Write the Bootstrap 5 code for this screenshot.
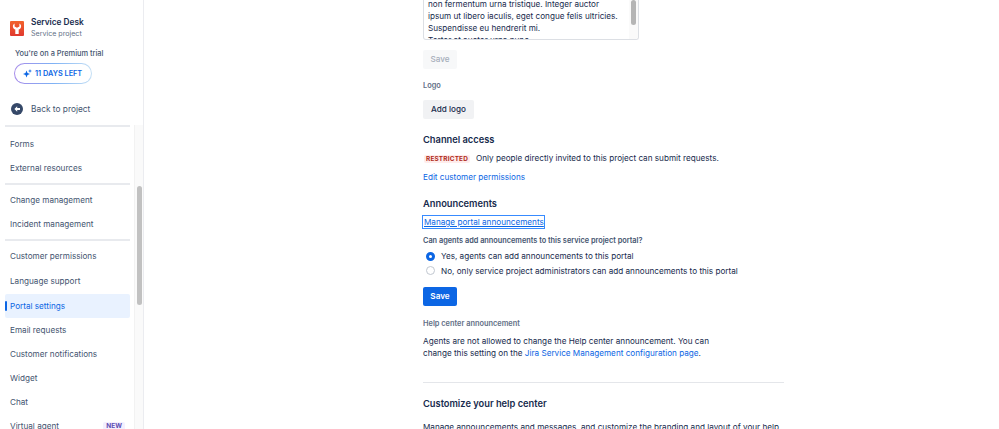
<!DOCTYPE html>
<html lang="en">
<head>
  <meta charset="UTF-8">
  <meta name="viewport" content="width=device-width, initial-scale=1.0">
  <title>Portal settings</title>
  <link href="https://cdn.jsdelivr.net/npm/bootstrap@5.3.0/dist/css/bootstrap.min.css" rel="stylesheet">
  <style>
    html, body {
      height: 429px;
      overflow: hidden;
    }
    body {
      font-family: Inter, "Liberation Sans", sans-serif;
      font-size: 8.17px;
      line-height: 12px;
      color: #172b4d;
      background: #fff;
    }
    a { color: #0c66e4; text-decoration: none; }
    .side-bar {
      width: 144px;
      height: 429px;
      flex: none;
      border-right: 1px solid #ebecf0;
      overflow: hidden;
    }
    .side-head { height: 125px; padding: 15px 0 0 10px; }
    .proj-logo {
      width: 14px;
      height: 15px;
      margin-top: 6px;
      margin-right: 7px;
    }
    .proj-name { font-weight: 600; font-size: 8.3px; line-height: 12px; margin-top: 1px; }
    .proj-sub { font-size: 7.1px; color: #626f86; line-height: 12px; }
    .trial-text { font-size: 7.4px; font-weight: 500; margin: 8px 0 0 5px; line-height: 12px; color: #44546f; }
    .trial-pill {
      display: flex;
      align-items: center;
      gap: 3px;
      height: 21px;
      width: 78px;
      margin: 3px 0 0 4px;
      padding-left: 8px;
      border-radius: 11px;
      border: 1px solid transparent;
      background: linear-gradient(#fff, #fff) padding-box, linear-gradient(90deg, #a78bea, #7fb2f5 50%, #c5e0f5) border-box;
      font-size: 7.3px;
      font-weight: 600;
      color: #0c66e4;
    }
    .back-row {
      display: flex;
      align-items: center;
      gap: 8px;
      margin: 19px 0 0 1px;
      font-size: 8.35px;
      color: #44546f;
    }
    .side-rule { height: 2px; background: #e8eaee; margin-left: 5px; width: 125px; }
    .nav-col { width: 134px; }
    .nav-group { padding: 3px 0; }
    .nav-group.first { padding-top: 5px; }
    .side-item {
      display: flex;
      align-items: center;
      justify-content: space-between;
      height: 24px;
      margin-left: 5px;
      width: 125px;
      padding: 0 5px 0 5px;
      font-size: 8.17px;
      color: #44546f;
      border-radius: 2px;
      position: relative;
    }
    .side-item.spaced { margin-bottom: 1px; }
    .side-item.active { background: #e9f2ff; color: #0c66e4; }
    .side-item.active::before {
      content: "";
      position: absolute;
      left: 0;
      top: 7px;
      bottom: 7px;
      width: 2px;
      border-radius: 1px;
      background: #0c66e4;
    }
    .new-tag {
      font-size: 6.5px;
      font-weight: 700;
      color: #5e4db2;
      background: #f3f0ff;
      padding: 0 3px;
      line-height: 9px;
      border-radius: 2px;
    }
    .scroll-track { width: 9px; background: #fafafa; border-left: 1px solid #f2f2f2; padding-left: 2px; }
    .scroll-thumb { width: 5px; height: 119px; margin-top: 61px; background: #c1c1c1; border-radius: 3px; }
    .main-col { width: 361px; margin-left: 279px; flex: none; }
    .text-box {
      height: 40px;
      width: 216px;
      margin-bottom: 10px;
      border: 1px solid #dcdfe4;
      border-top: 0;
      border-radius: 0 0 3px 3px;
      overflow: hidden;
      position: relative;
      padding: 0 0 0 4px;
      white-space: nowrap;
    }
    .box-copy { margin-top: -2px; }
    .box-track { position: absolute; top: 0; right: 0; bottom: 0; width: 9px; background: #fafafa; }
    .box-thumb {
      position: absolute;
      top: 0;
      right: 2px;
      width: 5px;
      height: 25px;
      border-radius: 3px;
      background: #b5b5b5;
    }
    .ak-btn {
      display: block;
      height: 19px;
      line-height: 19px;
      padding: 0 8px;
      border-radius: 2px;
      border: 0;
      font-size: 8.17px;
      font-weight: 500;
      background: #f1f2f4;
      color: #172b4d;
    }
    .ak-btn.off { color: #a5adba; background: #f7f8f9; width: 34px; padding: 0; text-align: center; }
    .ak-btn.go { background: #0c66e4; color: #fff; width: 34px; padding: 0; text-align: center; font-weight: 600; margin-top: 9px; }
    .field-label { font-size: 7.4px; font-weight: 600; color: #626f86; line-height: 12px; }
    .sect-title { font-size: 9.3px; font-weight: 600; line-height: 14px; margin: 0; color: #172b4d; }
    .lozenge {
      display: inline-block;
      font-size: 6.4px;
      line-height: 8px;
      font-weight: 700;
      color: #ae2a19;
      background: #ffeceb;
      padding: 0 2px;
      border-radius: 2px;
      margin: 0 6px 0 1px;
      letter-spacing: .2px;
    }
    .focus-link {
      display: inline-block;
      outline: 1px solid #388bff;
      color: #0c66e4;
      text-decoration: underline;
      line-height: 12px;
      padding: 0 0 0 1px;
    }
    .ask-label { font-size: 7.33px; font-weight: 600; color: #44546f; }
    .opt-row { display: flex; align-items: center; gap: 6px; padding-left: 3px; height: 14.5px; color: #172b4d; white-space: nowrap; }
    .opt-dot { width: 9px; height: 9px; border-radius: 50%; background: #fff; border: 1px solid #c1c7d0; flex: none; }
    .opt-dot.on { border: 3px solid #0c66e4; }
    .page-rule { height: 1px; background: #e4e6ea; margin-top: 23px; }
    .gap-2px { margin-top: 2px; }
    .gap-5px { margin-top: 5px; }
    .gap-7px { margin-top: 7px; }
    .gap-8px { margin-top: 8px; }
    .gap-10px { margin-top: 10px; }
    .gap-11px { margin-top: 11px; }
    .gap-12px { margin-top: 12px; }
    .gap-14px { margin-top: 14px; }
  </style>
</head>
<body>
  <div class="d-flex">
    <div class="side-bar">
      <div class="side-head">
        <div class="d-flex">
          <svg class="proj-logo" viewBox="0 0 14 15">
            <defs>
              <linearGradient id="logoFill" x1="0" y1="0" x2="0" y2="1">
                <stop offset="0" stop-color="#f2632c"/>
                <stop offset="1" stop-color="#e0392f"/>
              </linearGradient>
            </defs>
            <rect width="14" height="15" rx="1" fill="url(#logoFill)"/>
            <path d="M4.600 2.600C3.200 3.300 2.600 4.800 3 6.200 3.300 7.300 4.200 8.100 5.300 8.400V13H8.700V8.400C9.800 8.100 10.700 7.300 11 6.200 11.400 4.800 10.800 3.300 9.400 2.600V5.400L7 6.800 4.600 5.400Z" fill="#fff"/>
          </svg>
          <div>
            <div class="proj-name">Service Desk</div>
            <div class="proj-sub">Service project</div>
          </div>
        </div>
        <div class="trial-text">You're on a Premium trial</div>
        <div class="trial-pill">
          <svg width="9" height="9" viewBox="0 0 9 9"><path d="M3.500 1.500l1 2.500 2.500 1-2.500 1-1 2.500-1-2.500L0 5l2.500-1z M7 0l.5 1.500L9 2l-1.500.5L7 4l-.5-1.500L5 2l1.500-.5z" fill="#0c66e4"/></svg>
          11 DAYS LEFT
        </div>
        <div class="back-row">
          <svg width="12" height="12" viewBox="0 0 12 12"><circle cx="6" cy="6" r="6" fill="#354868"/><path d="M6.200 3.300L3.400 6l2.800 2.700V6.900H9V5.100H6.200z" fill="#fff"/></svg>
          <span>Back to project</span>
        </div>
      </div>
      <div class="d-flex">
        <div class="nav-col">
          <div class="side-rule"></div>
          <div class="nav-group first">
            <div class="side-item">Forms</div>
            <div class="side-item">External resources</div>
          </div>
          <div class="side-rule"></div>
          <div class="nav-group">
            <div class="side-item">Change management</div>
            <div class="side-item">Incident management</div>
          </div>
          <div class="side-rule"></div>
          <div class="nav-group">
            <div class="side-item spaced">Customer permissions</div>
            <div class="side-item spaced">Language support</div>
            <div class="side-item active">Portal settings</div>
            <div class="side-item">Email requests</div>
            <div class="side-item">Customer notifications</div>
            <div class="side-item">Widget</div>
            <div class="side-item">Chat</div>
            <div class="side-item">Virtual agent <span class="new-tag">NEW</span></div>
          </div>
        </div>
        <div class="scroll-track"><div class="scroll-thumb"></div></div>
      </div>
    </div>

    <div class="main-col">
      <div class="text-box">
        <div class="box-copy">non fermentum urna tristique. Integer auctor<br>ipsum ut libero iaculis, eget congue felis ultricies.<br>Suspendisse eu hendrerit mi.<br>Tortor at auctor urna nunc.</div>
        <div class="box-track"></div>
        <div class="box-thumb"></div>
      </div>
      <button class="ak-btn off" type="button">Save</button>
      <div class="field-label gap-11px">Logo</div>
      <button class="ak-btn gap-8px" type="button">Add logo</button>
      <h2 class="sect-title gap-14px">Channel access</h2>
      <div class="gap-5px"><span class="lozenge">RESTRICTED</span>Only people directly invited to this project can submit requests.</div>
      <div class="gap-7px"><a href="#">Edit customer permissions</a></div>
      <h2 class="sect-title gap-14px">Announcements</h2>
      <div class="gap-5px d-flex"><a class="focus-link" href="#">Manage portal announcements</a></div>
      <div class="ask-label gap-7px">Can agents add announcements to this service project portal?</div>
      <div class="opt-row gap-2px"><span class="opt-dot on"></span>Yes, agents can add announcements to this portal</div>
      <div class="opt-row"><span class="opt-dot"></span>No, only service project administrators can add announcements to this portal</div>
      <button class="ak-btn go" type="button">Save</button>
      <div class="field-label gap-12px">Help center announcement</div>
      <p class="gap-5px mb-0">Agents are not allowed to change the Help center announcement. You can<br>change this setting on the <a href="#">Jira Service Management configuration page</a>.</p>
      <div class="page-rule"></div>
      <h2 class="sect-title gap-14px">Customize your help center</h2>
      <p class="gap-10px mb-0">Manage announcements and messages, and customize the branding and layout of your help<br>center.</p>
    </div>
  </div>
</body>
</html>
